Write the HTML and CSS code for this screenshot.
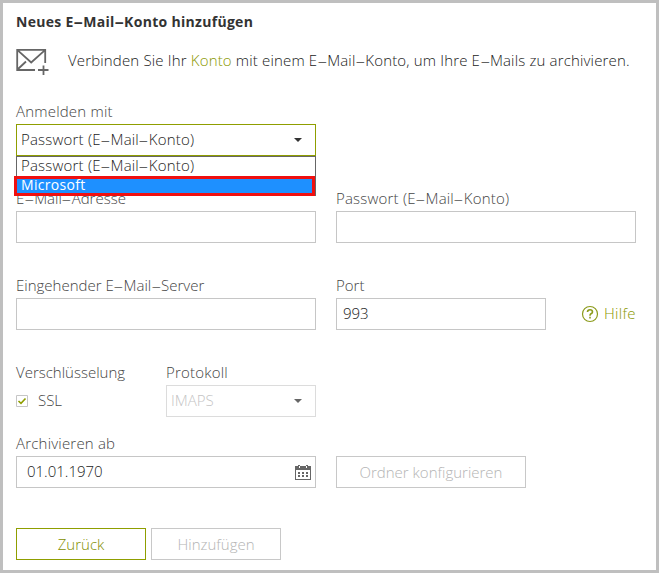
FILE: index.html
```html
<!DOCTYPE html>
<html lang="de">
<head>
<meta charset="utf-8">
<title>Neues E-Mail-Konto hinzufügen</title>
<link rel="stylesheet" href="styles.css">
</head>
<body>
<main class="dialog">
  <h1 class="title"><span>Neues E<i class="hy">-</i>Mail<i class="hy">-</i>Konto hinzufügen</span></h1>
  <div class="intro">
    <svg class="mail" width="34" height="28" viewBox="0 0 34 28" fill="none" stroke="#666" stroke-width="1.8">
      <path d="M29.2 15V1.9H1.2V22H19M1.5 2.2L15.2 14.5L29 2.2M1.5 21.5L10 13.5M27.5 17.5V27M22 22H32.5"/>
    </svg>
    <p class="intro-text"><span>Verbinden Sie Ihr <a>Konto</a> mit einem E<i class="hy">-</i>Mail<i class="hy">-</i>Konto, um Ihre E<i class="hy">-</i>Mails zu archivieren.</span></p>
  </div>
  <div class="row">
    <div class="field wide login">
      <label><span class="roomy">Anmelden mit</span></label>
      <div class="box select active"><span class="roomy">Passwort (E<i class="hy">-</i>Mail<i class="hy">-</i>Konto)</span><i class="caret"></i></div>
      <div class="menu">
        <div class="option"><span class="roomy">Passwort (E<i class="hy">-</i>Mail<i class="hy">-</i>Konto)</span></div>
        <div class="option selected"><span>Microsoft</span></div>
      </div>
    </div>
  </div>
  <div class="row">
    <div class="field wide"><label><span>E<i class="hy">-</i>Mail<i class="hy">-</i>Adresse</span></label><div class="box"></div></div>
    <div class="field wide"><label><span class="roomy">Passwort (E<i class="hy">-</i>Mail<i class="hy">-</i>Konto)</span></label><div class="box"></div></div>
  </div>
  <div class="row">
    <div class="field wide"><label><span>Eingehender E<i class="hy">-</i>Mail<i class="hy">-</i>Server</span></label><div class="box"></div></div>
    <div class="field port"><label><span>Port</span></label><div class="box"><span class="num">993</span></div></div>
    <a class="help">
      <svg width="18" height="18" viewBox="0 0 18 18" fill="none" stroke="#8c9b1c" stroke-width="1.2"><circle cx="9" cy="9" r="7.5"/><path stroke-width="1.6" d="M6.5 7Q6.5 4.7 9 4.7T11.5 6.9Q11.5 8 10 8.8Q9 9.4 9 10.7M9 11.8V13.4"/></svg>
      <span>Hilfe</span>
    </a>
  </div>
  <div class="row">
    <div class="field crypt"><label><span>Verschlüsselung</span></label>
      <div class="check"><svg width="12" height="12" viewBox="0 0 12 12" fill="none"><path d="M.5 .5H11.5V11.5H.5Z" stroke="#c6c6c6"/><path d="M2.5 6L5 8.4L9.5 3.5" stroke="#8f9e00" stroke-width="1.6"/></svg><span>SSL</span></div>
    </div>
    <div class="field protocol"><label><span class="roomy">Protokoll</span></label><div class="box select disabled"><span>IMAPS</span><i class="caret"></i></div></div>
  </div>
  <div class="row tight">
    <div class="field wide"><label><span class="roomy">Archivieren ab</span></label>
      <div class="box date"><span>01.01.1970</span>
        <svg width="16" height="15" viewBox="0 0 16 15" shape-rendering="crispEdges"><path fill="#666" fill-rule="evenodd" d="M0 1H3V0H5V1H11V0H13V1H16V15H0ZM1 5V14H15V5ZM4 1V3H5V1ZM11 1V3H12V1Z"/><path fill="#666" d="M3 7h2v2H3zM7 7h2v2H7zM11 7h2v2h-2zM3 10h2v2H3zM7 10h2v2H7zM11 10h2v2h-2z"/></svg>
      </div>
    </div>
    <button class="btn folder" disabled><span>Ordner konfigurieren</span></button>
  </div>
  <div class="actions">
    <button class="btn primary"><span>Zurück</span></button>
    <button class="btn" disabled><span>Hinzufügen</span></button>
  </div>
</main>
</body>
</html>
```
FILE: styles.css
```css
* { box-sizing: border-box; }
body { margin: 0; font-family: "Open Sans", "Noto Sans", sans-serif; font-size: 15px; font-weight: 300; color: #222; }
.dialog { width: 659px; height: 573px; padding: 7px 13px 0; border: 3px solid #bfbfbf; background: #fff; overflow: hidden; }
span { white-space: nowrap; }
.hy { display: inline-block; margin: 0 2.5px; font-style: normal; transform: scaleX(2.1); letter-spacing: 0; }
.roomy { letter-spacing: .2px; }
.title { margin: 0; height: 24px; line-height: 24px; font-size: 14px; font-weight: 700; letter-spacing: .3px; color: #333; }
.intro { display: flex; height: 68px; padding-top: 14px; }
.mail { flex: none; margin-right: 18px; }
.intro-text { margin: 0; line-height: 25px; letter-spacing: .16px; }
a { color: #8a9800; }
.row { display: flex; gap: 20px; height: 54px; margin-bottom: 33px; }
.row:nth-of-type(5) { margin-bottom: 17px; }
.row.tight { margin-bottom: 40px; align-items: flex-end; }
.wide { width: 300px; }
.port { width: 210px; }
.crypt { width: 130px; }
.protocol { width: 150px; }
label { display: block; height: 22px; line-height: 18px; color: #444; }
.box { display: flex; align-items: center; height: 32px; padding: 0 6px; border: 1px solid #c6c6c6; background: #fff; }
.box > span { position: relative; top: -1px; }
.select { justify-content: space-between; padding: 0 13px 0 4px; }
.active { border-color: #8f9e00; }
.disabled { border-color: #dcdcdc; color: #c4c4c4; }
.caret { width: 8px; height: 4px; background: #333; clip-path: polygon(0 0, 100% 0, 50% 100%); }
.disabled .caret { background: #666; }
.login { position: relative; }
.menu { position: absolute; top: 54px; left: 0; width: 300px; height: 40px; border: 1px solid #666; border-bottom: 0; background: #fff; z-index: 1; }
.option { height: 19px; line-height: 17px; padding-left: 4px; }
.selected { width: 301px; height: 20px; line-height: 11px; margin-left: -3px; border: 3px solid #f01010; background: #1e90ff; color: #fff; font-weight: 400; font-size: 14px; letter-spacing: .3px; }
.help { display: flex; align-items: center; gap: 5px; height: 32px; margin: 22px 0 0 15px; letter-spacing: .3px; }
.help > span { line-height: 28px; padding-bottom: 2px; }
.check { display: flex; align-items: center; gap: 10px; height: 32px; color: #444; }
.check > span { line-height: 28px; padding-bottom: 2px; }
.date { justify-content: space-between; padding: 0 4px 0 10px; }
.btn { width: 130px; height: 32px; padding: 0; border: 1px solid #c8c8c8; background: #fff; font: inherit; letter-spacing: inherit; color: #b4b4b4; }
.folder { width: 190px; }
.primary { border-color: #8f9e00; color: #7f8e00; }
.actions { display: flex; gap: 5px; }
```
